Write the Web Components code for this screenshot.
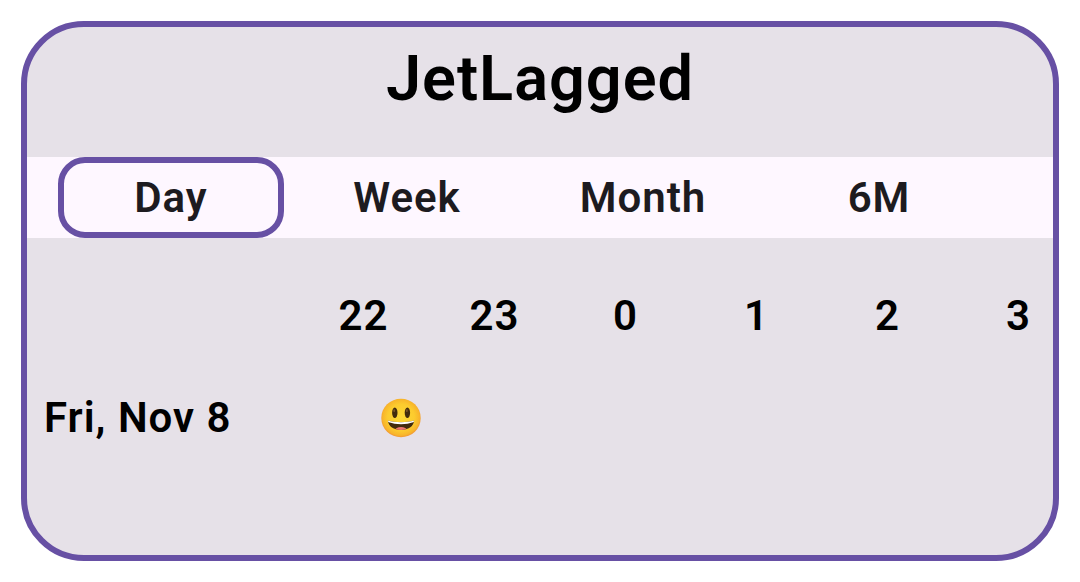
<!DOCTYPE html>
<html lang="en">
<head>
<meta charset="utf-8">
<meta name="viewport" content="width=device-width, initial-scale=1">
<title>JetLagged</title>
<style>
  body { margin: 0; padding: 21px; background: #fff; font-family: Roboto, "Open Sans", sans-serif; font-weight: 600; letter-spacing: 1px; }
</style>
</head>
<body>
<sleep-card heading="JetLagged">
  <period-tabs>
    <period-tab selected>Day</period-tab>
    <period-tab>Week</period-tab>
    <period-tab>Month</period-tab>
    <period-tab>6M</period-tab>
  </period-tabs>
  <sleep-timeline hours="22,23,0,1,2,3" day="Fri, Nov 8"></sleep-timeline>
</sleep-card>
<script>
class SleepCard extends HTMLElement {
  connectedCallback() {
    const root = this.attachShadow({ mode: 'open' });
    root.innerHTML = `
      <style>
        :host { display: block; overflow: hidden; box-sizing: border-box; border: 6px solid #6750a4; border-radius: 63px; background: #e6e1e8; color: #000; }
        h1 { margin: 0; padding: 14px 0 41px; font-size: 63px; line-height: 75px; font-weight: inherit; text-align: center; }
      </style>
      <h1></h1>
      <slot></slot>`;
    root.querySelector('h1').textContent = this.getAttribute('heading');
  }
}

class PeriodTabs extends HTMLElement {
  connectedCallback() {
    this.attachShadow({ mode: 'open' }).innerHTML = `
      <style>
        :host { display: block; background: #fef7ff; color: #1d1b20; }
        nav { display: grid; grid-template-columns: repeat(4, 1fr); gap: 10px; padding: 0 61px 0 31px; }
      </style>
      <nav aria-label="Period"><slot></slot></nav>`;
  }
}

class PeriodTab extends HTMLElement {
  connectedCallback() {
    const root = this.attachShadow({ mode: 'open' });
    root.innerHTML = `
      <style>
        :host { display: block; }
        button { display: block; box-sizing: border-box; width: 100%; height: 81px; margin: 0; padding: 0; border: 6px solid transparent; border-radius: 27px; background: none; color: inherit; font: inherit; font-size: 42px; line-height: 60px; letter-spacing: inherit; text-align: center; }
        :host([selected]) button { border-color: #6750a4; }
      </style>
      <button type="button"><slot></slot></button>`;
    root.querySelector('button').setAttribute('aria-pressed', String(this.hasAttribute('selected')));
    this.addEventListener('click', () => {
      for (const tab of this.parentElement.children) {
        tab.toggleAttribute('selected', tab === this);
        tab.shadowRoot.querySelector('button').setAttribute('aria-pressed', String(tab === this));
      }
    });
  }
}

class MoodFace extends HTMLElement {
  connectedCallback() {
    this.attachShadow({ mode: 'open' }).innerHTML = `
      <style>
        :host { display: block; width: 40px; height: 40px; }
        svg { display: block; }
      </style>
      <svg width="40" height="40" viewBox="0 0 40 40" role="img" aria-label="Slept well">
        <defs>
          <radialGradient id="skin" cx="50%" cy="48%" r="52%">
            <stop offset="0" stop-color="#fdd835"/>
            <stop offset=".65" stop-color="#fccb2e"/>
            <stop offset=".9" stop-color="#f8b52a"/>
            <stop offset="1" stop-color="#f19534"/>
          </radialGradient>
          <clipPath id="mouth"><path d="M7 22.500C13 24.800 27 24.800 33 22.500C32.800 28.500 27 32 20 32S7.200 28.500 7 22.500Z"/></clipPath>
        </defs>
        <ellipse cx="20" cy="20" rx="19.700" ry="19.300" fill="url(#skin)"/>
        <ellipse cx="13.800" cy="14.800" rx="2.700" ry="5.200" fill="#422b0d"/>
        <ellipse cx="26.400" cy="14.800" rx="2.700" ry="5.200" fill="#422b0d"/>
        <ellipse cx="13.200" cy="12.700" rx="1" ry="1.400" fill="#785428"/>
        <ellipse cx="25.800" cy="12.700" rx="1" ry="1.400" fill="#785428"/>
        <g clip-path="url(#mouth)">
          <rect x="6" y="21" width="28" height="13" fill="#422b0d"/>
          <path d="M6 21H34V23.500Q20 29 6 23.500Z" fill="#fff"/>
          <ellipse cx="20" cy="32" rx="6" ry="3" fill="#ed7770"/>
        </g>
      </svg>`;
  }
}

class SleepTimeline extends HTMLElement {
  connectedCallback() {
    const root = this.attachShadow({ mode: 'open' });
    const hours = this.getAttribute('hours').split(',');
    root.innerHTML = `
      <style>
        :host { display: block; overflow-x: auto; scrollbar-width: none; padding: 27px 0 86px; font-size: 42px; line-height: 60px; }
        table { table-layout: fixed; width: 1057px; border-collapse: collapse; }
        col.label { width: 271px; }
        col.hour { width: 131px; }
        th, td { height: 102px; padding: 0; font-weight: inherit; text-align: center; vertical-align: middle; }
        tbody th { padding-left: 17px; text-align: left; }
        mood-face { margin-left: 83px; }
      </style>
      <table aria-label="Sleep">
        <colgroup><col class="label">${hours.map(() => '<col class="hour">').join('')}</colgroup>
        <thead><tr><td></td>${hours.map(h => `<th scope="col">${h}</th>`).join('')}</tr></thead>
        <tbody><tr><th scope="row">${this.getAttribute('day')}</th><td><mood-face></mood-face></td><td colspan="${hours.length - 1}"></td></tr></tbody>
      </table>`;
  }
}

customElements.define('sleep-card', SleepCard);
customElements.define('period-tabs', PeriodTabs);
customElements.define('period-tab', PeriodTab);
customElements.define('mood-face', MoodFace);
customElements.define('sleep-timeline', SleepTimeline);
</script>
</body>
</html>
